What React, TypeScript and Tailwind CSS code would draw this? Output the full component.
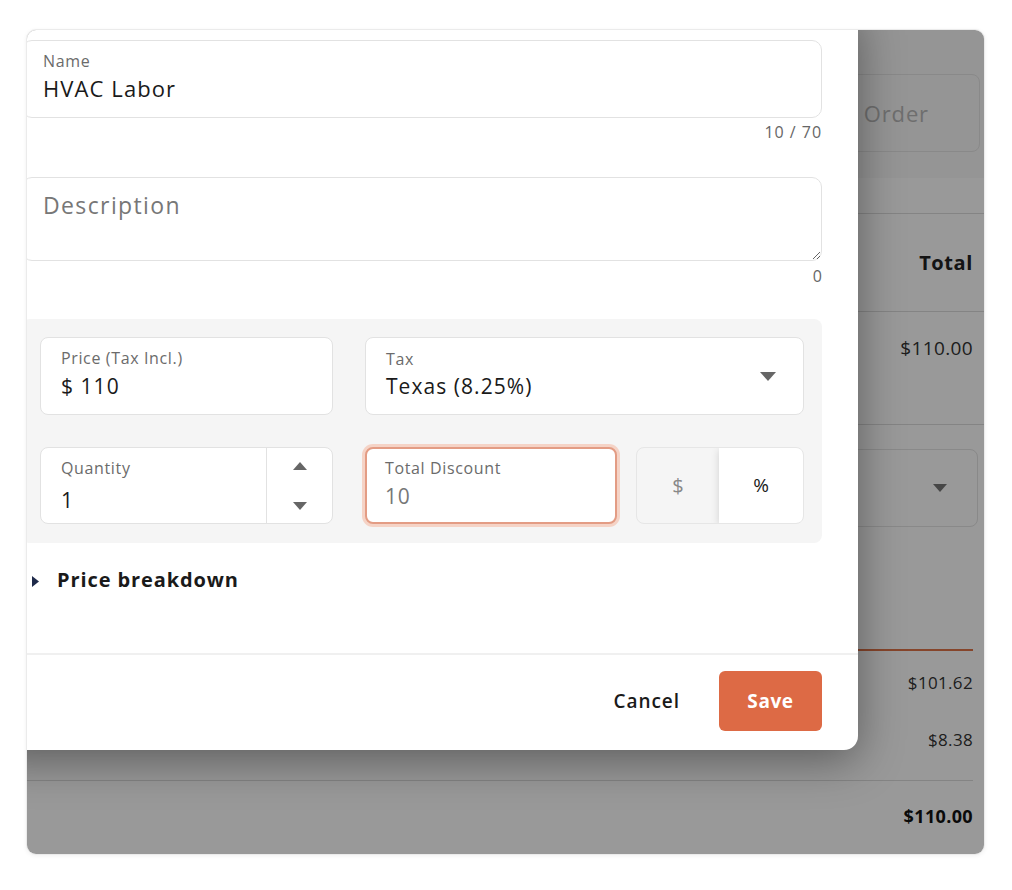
import React from "react";

const Caret = ({ dir, className }: { dir: "up" | "down"; className?: string }) => (
  <svg width="14" height="8" viewBox="0 0 14 8" className={className}>
    {dir === "down" ? <path d="M0 0h14L7 8z" fill="currentColor" /> : <path d="M7 0l7 8H0z" fill="currentColor" />}
  </svg>
);

const BackgroundPage: React.FC = () => (
  <div className="flex h-full w-full flex-col bg-white text-[#222]">
    <div className="flex h-[148px] items-end justify-end bg-[#f8f8f8] pb-[26px] pr-[4px]">
      <div className="flex h-[78px] items-center rounded-lg border border-[#e4e4e4] pl-[120px] pr-[50px] text-[22px] tracking-[0.04em] text-[#b8b8b8]">
        Order
      </div>
    </div>
    <div className="h-[36px] border-b border-[#dcdcdc] bg-white" />
    <div className="flex h-[98px] items-center justify-end border-b border-[#dcdcdc] pr-[11px] text-[20px] font-bold tracking-[0.03em]">
      Total
    </div>
    <div className="flex h-[113px] justify-end border-b border-[#dcdcdc] pr-[11px] pt-[22px] text-[19px] leading-[28px] tracking-[0.02em] text-[#333]">
      $110.00
    </div>
    <div className="flex justify-end pr-[6px] pt-[24px]">
      <div className="flex h-[78px] w-[300px] items-center justify-end rounded-lg border border-[#e4e4e4] pr-[30px] text-[#777]">
        <Caret dir="down" />
      </div>
    </div>
    <div className="mr-[11px] mt-[122px] flex flex-col">
      <div className="h-[2px] bg-[#e07448]" />
      <div className="flex justify-end pt-[19px] text-[17px] leading-[26px] tracking-[0.02em] text-[#333]">$101.62</div>
      <div className="flex justify-end pt-[31px] text-[17px] leading-[26px] tracking-[0.02em] text-[#333]">$8.38</div>
      <div className="mt-[27px] h-px bg-[#dcdcdc]" />
      <div className="flex justify-end pt-[22px] text-[18px] font-bold leading-[26px] tracking-[0.02em] text-[#111]">
        $110.00
      </div>
    </div>
  </div>
);

const FieldLabel = ({ children }: { children: React.ReactNode }) => (
  <div className="text-[16px] leading-[20px] tracking-[0.04em] text-[#6b6b6b]">{children}</div>
);

const ItemModal: React.FC = () => (
  <div className="absolute left-[-41px] top-[-20px] w-[872px] rounded-b-[14px] bg-white shadow-[0_10px_45px_rgba(0,0,0,0.4)]">
    <div className="px-[36px] pb-[59px] pt-[30px]">
      {/* Name */}
      <div className="h-[78px] rounded-[10px] border border-[#e2e2e2] px-5 pt-[10px]">
        <FieldLabel>Name</FieldLabel>
        <div className="mt-[2px] text-[22px] leading-[30px] tracking-[0.05em] text-[#1a1a1a]">HVAC Labor</div>
      </div>
      <div className="mt-[4px] text-right text-[16px] leading-[20px] tracking-[0.06em] text-[#666]">10 / 70</div>

      {/* Description */}
      <textarea
        placeholder="Description"
        className="mt-[35px] block h-[84px] w-full rounded-[10px] border border-[#e2e2e2] px-5 pt-[12px] text-[23px] leading-[30px] tracking-[0.06em] text-[#1a1a1a] outline-none placeholder:text-[#777]"
      />
      <div className="mt-[5px] text-right text-[16px] leading-[20px] text-[#666]">0</div>

      {/* Price / tax panel */}
      <div className="mt-[33px] rounded-lg bg-[#f5f5f5] px-[18px] pb-[19px] pt-[18px]">
        <div className="grid grid-cols-[293px_439px] gap-x-[32px] gap-y-[32px]">
          <div className="h-[78px] rounded-lg border border-[#e2e2e2] bg-white px-5 pt-[10px]">
            <FieldLabel>Price (Tax Incl.)</FieldLabel>
            <div className="mt-[3px] text-[21px] leading-[30px] tracking-[0.05em] text-[#1a1a1a]">$ 110</div>
          </div>
          <div className="flex h-[78px] items-center rounded-lg border border-[#e2e2e2] bg-white pl-5 pr-[27px]">
            <div className="flex-1 pb-[3px]">
              <FieldLabel>Tax</FieldLabel>
              <div className="mt-[2px] text-[21px] leading-[30px] tracking-[0.05em] text-[#1a1a1a]">Texas (8.25%)</div>
            </div>
            <svg width="16" height="9" viewBox="0 0 16 9" className="text-[#666]">
              <path d="M0 0h16L8 9z" fill="currentColor" />
            </svg>
          </div>

          <div className="flex h-[77px] rounded-lg border border-[#e2e2e2] bg-white">
            <div className="flex-1 px-5 pt-[10px]">
              <FieldLabel>Quantity</FieldLabel>
              <div className="mt-[7px] text-[21px] leading-[30px] text-[#1a1a1a]">1</div>
            </div>
            <div className="flex w-[66px] flex-col items-center justify-between border-l border-[#e2e2e2] pb-[13px] pt-[14px] text-[#666]">
              <Caret dir="up" />
              <Caret dir="down" />
            </div>
          </div>
          <div className="flex gap-[19px]">
            <div className="h-[77px] w-[252px] rounded-lg border-2 border-[#e39c84] bg-white px-[18px] pt-[9px] ring-[3px] ring-[#f5d3c6]">
              <FieldLabel>Total Discount</FieldLabel>
              <div className="mt-[3px] text-[21px] leading-[30px] tracking-[0.04em] text-[#777]">10</div>
            </div>
            <div className="flex h-[77px] flex-1 overflow-hidden rounded-lg border border-[#e6e6e6] bg-[#f5f5f5]">
              <div className="flex flex-1 items-center justify-center text-[20px] text-[#888]">$</div>
              <div className="flex w-[84px] items-center justify-center bg-white text-[19px] text-[#1a1a1a] shadow-[0_2px_8px_rgba(0,0,0,0.15)]">
                %
              </div>
            </div>
          </div>
        </div>
      </div>

      {/* Price breakdown */}
      <div className="mt-[23px] flex items-center">
        <svg width="7" height="11" viewBox="0 0 7 11" className="ml-[10px] mt-[2px] text-[#1f2a4a]">
          <path d="M0 0l7 5.5L0 11z" fill="currentColor" />
        </svg>
        <span className="ml-[18px] text-[20px] font-bold leading-[28px] tracking-[0.045em] text-[#1a1a1a]">
          Price breakdown
        </span>
      </div>
    </div>

    {/* Footer */}
    <div className="flex items-center justify-end gap-[39px] border-t-2 border-[#f0f0f0] px-[36px] pb-[19px] pt-[16px]">
      <button className="text-[19px] font-semibold tracking-[0.05em] text-[#1a1a1a]">Cancel</button>
      <button className="h-[60px] w-[103px] rounded-md bg-[#dd6a45] text-[19px] font-bold tracking-[0.03em] text-white">
        Save
      </button>
    </div>
  </div>
);

export default function App() {
  return (
    <div className="min-h-screen bg-white pl-[26px] pt-[29px] font-['Open_Sans','Noto_Sans',sans-serif]">
      <div className="relative h-[826px] w-[959px] overflow-hidden rounded-[10px] border border-[#ebebeb] shadow-[0_1px_4px_rgba(0,0,0,0.06)]">
        <BackgroundPage />
        <div className="absolute inset-0 bg-black/40" />
        <ItemModal />
      </div>
    </div>
  );
}
